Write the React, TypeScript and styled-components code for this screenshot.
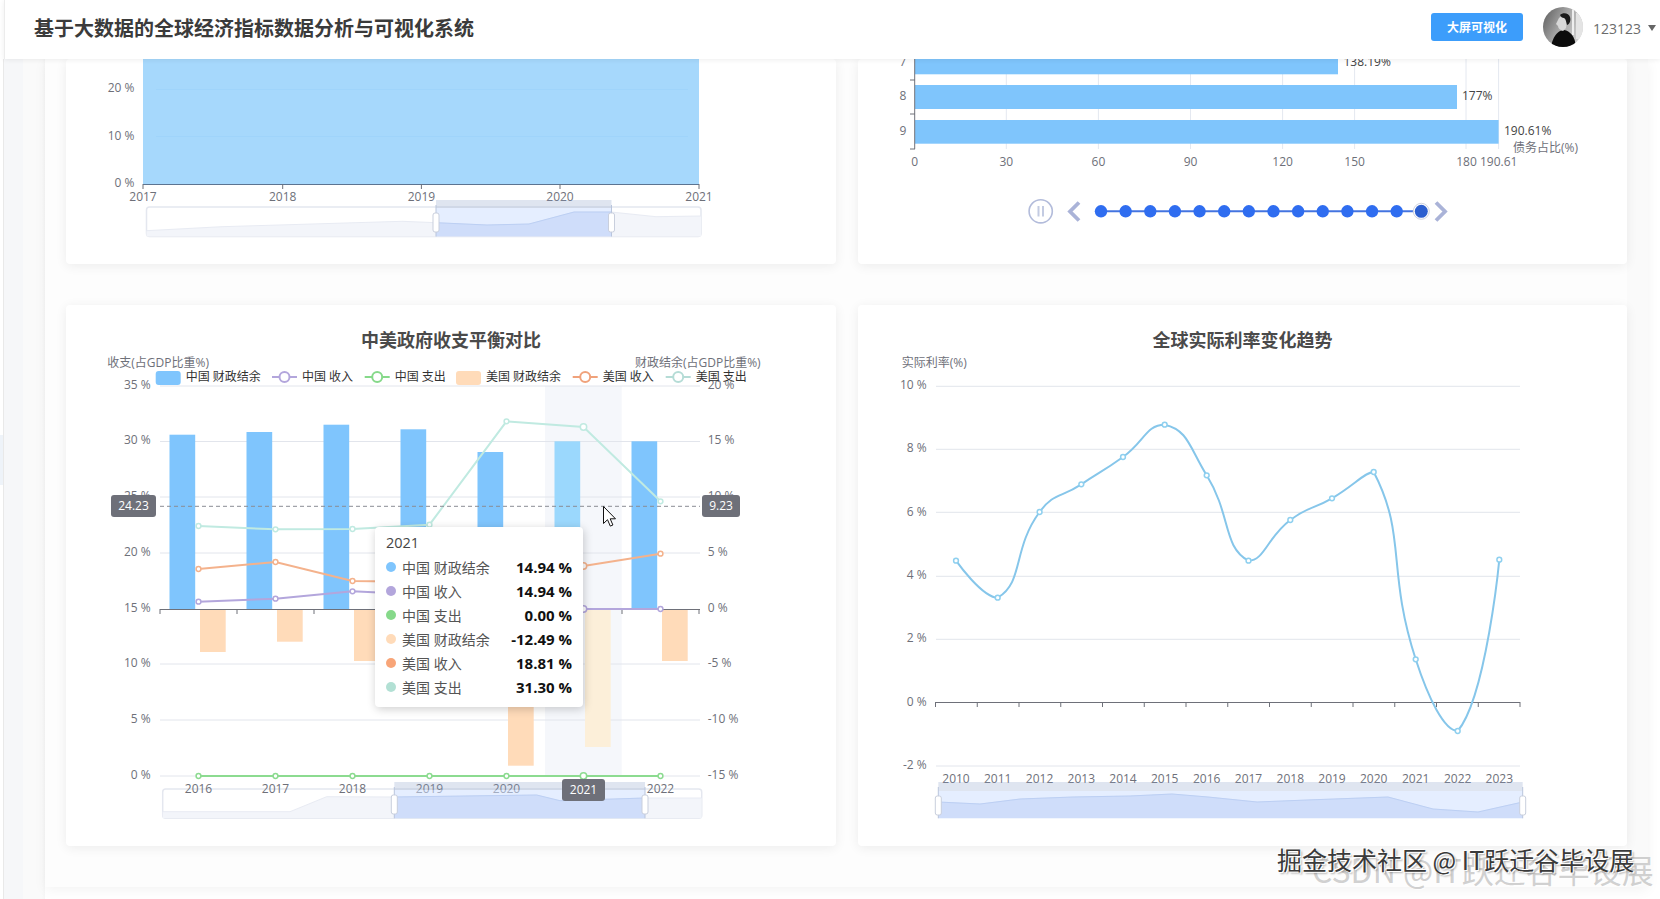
import React from 'react';
import styled, { createGlobalStyle } from 'styled-components';

const GlobalStyle = createGlobalStyle`
  html, body, #root {
    margin: 0;
    height: 100%;
  }
  body {
    font-family: "Open Sans", "Noto Sans CJK SC", sans-serif;
    background: #fff;
    overflow: hidden;
  }
`;

const Page = styled.div`
  position: relative;
  height: 899px;
  display: flex;
  flex-direction: column;
  overflow: hidden;
`;

const Header = styled.header`
  position: relative;
  z-index: 2;
  flex: none;
  height: 59px;
  margin-left: 4px;
  padding: 0 4px 0 29px;
  display: flex;
  align-items: center;
  background: #fff;
  border-left: 1px solid #ececec;
  box-shadow: 0 1px 5px rgba(0, 0, 0, 0.07);
`;

const SiteTitle = styled.h1`
  margin: 0 0 2px;
  flex: 1;
  font-size: 20px;
  line-height: 28px;
  font-weight: 700;
  color: #3b3b3b;
`;

const ScreenButton = styled.button`
  width: 92px;
  height: 28px;
  margin: 0 20px 6px 0;
  padding: 0;
  border: none;
  border-radius: 3px;
  background: #3c9dfb;
  color: #fff;
  font: 700 12px "Noto Sans CJK SC", sans-serif;
`;

const Avatar = styled.svg`
  width: 40px;
  height: 40px;
  margin: 0 10px 5px 0;
`;

const UserName = styled.span`
  font-size: 14px;
  color: #6b6b6b;
  margin-bottom: 3px;
`;

const Caret = styled.span`
  width: 0;
  height: 0;
  margin: 0 0 3px 7px;
  border-left: 4px solid transparent;
  border-right: 4px solid transparent;
  border-top: 6px solid #666;
`;

const Body = styled.div`
  flex: 1;
  display: flex;
  min-height: 0;
`;

const SideRail = styled.div`
  flex: none;
  width: 3px;
  padding-top: 376px;
  background: #fff;
  border-right: 1px solid #e9e9e9;
`;

const SideTab = styled.div`
  height: 50px;
  background: #eef3f9;
`;

const SideGutter = styled.div`
  flex: none;
  width: 41px;
  background: linear-gradient(90deg, #f6f7f9 0 19px, #fafafa 19px 38px, #f6f6f6 41px);
`;

const Main = styled.main`
  flex: none;
  width: 1603px;
  height: 828px;
  padding: 0 21px 41px;
  box-sizing: border-box;
  display: grid;
  grid-template-columns: 770px 769px;
  grid-template-rows: 205px 541px;
  column-gap: 22px;
  row-gap: 41px;
  background: #fdfdfd;
  box-shadow: 0 3px 12px rgba(0, 0, 0, 0.05), inset -21px 0 0 #fafafa;
`;

const Card = styled.section`
  position: relative;
  background: #fff;
  border-radius: 4px;
  box-shadow: 0 2px 12px rgba(0, 0, 0, 0.07);
  display: flex;
  flex-direction: column;
`;

const CardTitle = styled.h3`
  flex: none;
  margin: 0;
  padding-top: 23px;
  height: 25px;
  font-size: 18px;
  line-height: 24px;
  font-weight: 700;
  color: #4a4a4a;
  text-align: center;
`;

const Chart = styled.svg`
  display: block;
  flex: 1;
  width: 100%;
  min-height: 0;
  overflow: hidden;
`;

const Label = styled.text.attrs({ dy: -1 })<{ $anchor?: string; $color?: string }>`
  font-size: 12px;
  fill: ${(p) => p.$color ?? '#6e7079'};
  text-anchor: ${(p) => p.$anchor ?? 'middle'};
  dominant-baseline: central;
`;

const Tooltip = styled.div`
  position: absolute;
  left: 309px;
  top: 222px;
  width: 208px;
  height: 180px;
  box-sizing: border-box;
  padding: 4px 11px 8px 11px;
  background: #fff;
  border-radius: 4px;
  box-shadow: 1px 2px 10px rgba(0, 0, 0, 0.2);
`;

const TipTitle = styled.div`
  height: 24px;
  font-size: 14.5px;
  line-height: 24px;
  color: #464646;
`;

const TipRow = styled.div`
  height: 24px;
  display: flex;
  align-items: center;
`;

const TipDot = styled.i<{ $color: string }>`
  width: 10px;
  height: 10px;
  margin-right: 6px;
  border-radius: 50%;
  background: ${(p) => p.$color};
`;

const TipName = styled.span`
  font-size: 14px;
  color: #555;
`;

const TipValue = styled.b`
  margin-left: auto;
  font-size: 15px;
  font-weight: 700;
  color: #111;
`;

const JuejinMark = styled.div`
  position: absolute;
  left: 1277px;
  top: 843px;
  font: 400 25px/32px "Noto Sans CJK SC", sans-serif;
  white-space: nowrap;
  color: #3a3a3a;
  text-shadow: 1px 1px 0 #fff, -1px -1px 0 #fff, 2px 2px 2px rgba(0, 0, 0, 0.3);
  z-index: 4;
`;

const CsdnMark = styled.div`
  position: absolute;
  left: 1312px;
  top: 849px;
  font: 400 32px/40px "Noto Sans CJK SC", sans-serif;
  white-space: nowrap;
  color: rgba(170, 170, 170, 0.55);
  text-shadow: 1px 1px 0 rgba(255, 255, 255, 0.7);
  z-index: 3;
`;

type Pt = [number, number];

const toLine = (pts: Pt[]) => pts.map((p) => p.join(',')).join(' ');

// same idea as echarts smooth lines: tangent from neighbours, clamped at peaks
const smoothPath = (pts: Pt[], smooth = 0.5) => {
  const clamp = (v: number, a: number, b: number) => Math.min(Math.max(v, Math.min(a, b)), Math.max(a, b));
  const cps = pts.map((p, i) => {
    const prev = pts[i - 1];
    const next = pts[i + 1];
    if (!prev || !next) return { inc: p, out: p };
    const vx = (next[0] - prev[0]) * smooth;
    const vy = (next[1] - prev[1]) * smooth;
    const lp = Math.hypot(p[0] - prev[0], p[1] - prev[1]);
    const ln = Math.hypot(next[0] - p[0], next[1] - p[1]);
    const rn = ln / (lp + ln);
    const inc: Pt = [p[0] - vx * (1 - rn), clamp(p[1] - vy * (1 - rn), p[1], prev[1])];
    const out: Pt = [p[0] + vx * rn, clamp(p[1] + vy * rn, p[1], next[1])];
    return { inc, out };
  });
  let d = `M${pts[0][0]},${pts[0][1]}`;
  for (let i = 1; i < pts.length; i++) {
    const a = cps[i - 1].out;
    const b = cps[i].inc;
    d += ` C${a[0]},${a[1]} ${b[0]},${b[1]} ${pts[i][0]},${pts[i][1]}`;
  }
  return d;
};

interface ZoomProps {
  id: string;
  x0: number;
  x1: number;
  y0: number;
  y1: number;
  s0: number;
  s1: number;
  top: number;
  line: Pt[];
  framed?: boolean;
  children?: React.ReactNode;
}

// children are the axis labels that sit between the slider frame and its selection
const DataZoom: React.FC<ZoomProps> = ({ id, x0, x1, y0, y1, s0, s1, top, line, framed = true, children }) => {
  const area = `${x0},${y1} ${toLine(line)} ${x1},${y1}`;
  return (
    <g>
      <clipPath id={id}>
        <rect x={s0} y={top} width={s1 - s0} height={y1 - top} />
      </clipPath>
      {framed && <rect x={x0} y={y0} width={x1 - x0} height={y1 - y0} rx={3} fill="#fff" stroke="#e4e7ef" strokeWidth={1.5} />}
      <polygon points={area} fill="#f3f5fa" />
      <polyline points={toLine(line)} fill="none" stroke="#e8ebf3" />
      {children}
      <rect x={s0} y={top} width={s1 - s0} height={y0 - top + 1} fill="#8ba3c9" fillOpacity={0.28} />
      <rect x={s0} y={y0 + 1} width={s1 - s0} height={y1 - y0 - 1} fill="#cfe0ff" fillOpacity={0.55} />
      <polygon points={area} fill="#cbdbf9" fillOpacity={0.85} clipPath={`url(#${id})`} />
      <polyline points={toLine(line)} fill="none" stroke="#bccff3" clipPath={`url(#${id})`} />
      <line x1={s0} x2={s0} y1={top + 5} y2={y1} stroke="#b9c5dc" />
      <line x1={s1} x2={s1} y1={top + 5} y2={y1} stroke="#b9c5dc" />
      <rect x={s0 - 3} y={y0 + 6} width={6} height={19} rx={2} fill="#fff" stroke="#c9cfdd" />
      <rect x={s1 - 3} y={y0 + 6} width={6} height={19} rx={2} fill="#fff" stroke="#c9cfdd" />
    </g>
  );
};

const Pill: React.FC<{ x: number; y: number; w: number; text: string }> = ({ x, y, w, text }) => (
  <g>
    <rect x={x} y={y} width={w} height={22} rx={3} fill="#6e7079" />
    <Label x={x + w / 2} y={y + 11} $color="#fff">
      {text}
    </Label>
  </g>
);

const AreaChart = () => {
  const ticks = [143, 282.7, 421.4, 560, 699];
  const years = ['2017', '2018', '2019', '2020', '2021'];
  return (
    <Chart viewBox="66 59 770 205">
      <rect x={143} y={59} width={556} height={125} fill="#a6d8fc" />
      <line x1={156} x2={688} y1={89.5} y2={89.5} stroke="#9fd4fb" />
      <line x1={156} x2={688} y1={136.5} y2={136.5} stroke="#9fd4fb" />
      <Label x={134.5} y={88} $anchor="end">20 %</Label>
      <Label x={134.5} y={136} $anchor="end">10 %</Label>
      <Label x={134.5} y={183} $anchor="end">0 %</Label>
      <line x1={143} x2={699} y1={184.5} y2={184.5} stroke="#5c7491" />
      {ticks.map((x, i) => (
        <g key={x}>
          <line x1={x} x2={x} y1={184} y2={189} stroke="#6e7079" />
          <Label x={x} y={197}>{years[i]}</Label>
        </g>
      ))}
      <DataZoom
        id="zoom-a"
        x0={146.5}
        x1={701}
        y0={207}
        y1={236.5}
        s0={436}
        s1={611.5}
        top={200}
        line={[[146.5, 230.7], [222, 226.7], [402, 221.3], [436, 222.7], [487, 225], [529, 224], [574, 212], [611, 212], [656, 216.7], [701, 216]]}
      />
    </Chart>
  );
};

const BarTimeline = () => {
  const grid = [1006.3, 1098.4, 1190.5, 1282.6, 1354.6, 1466, 1498.6];
  const ticks: [number, string][] = [[914.7, '0'], [1006.3, '30'], [1098.4, '60'], [1190.5, '90'], [1282.6, '120'], [1354.6, '150'], [1466.5, '180']];
  const dots = Array.from({ length: 14 }, (_, i) => 1101 + i * 24.64);
  return (
    <Chart viewBox="858 59 769 205">
      {grid.map((x) => (
        <line key={x} x1={x} x2={x} y1={59} y2={149} stroke="#e4e8f0" />
      ))}
      <rect x={915} y={59} width={423} height={15.3} fill="#7fc5fc" />
      <rect x={915} y={85} width={542} height={24} fill="#7fc5fc" />
      <rect x={915} y={120} width={583.6} height={23.7} fill="#7fc5fc" />
      <line x1={914.7} x2={914.7} y1={59} y2={149} stroke="#6e7079" />
      {[80, 114, 149].map((y) => (
        <line key={y} x1={910} x2={915} y1={y} y2={y} stroke="#6e7079" />
      ))}
      <Label x={903} y={62}>7</Label>
      <Label x={903} y={96.5}>8</Label>
      <Label x={903} y={131}>9</Label>
      <Label x={1343.5} y={62} $anchor="start" $color="#444">138.19%</Label>
      <Label x={1462} y={96.5} $anchor="start" $color="#444">177%</Label>
      <Label x={1504} y={131.5} $anchor="start" $color="#444">190.61%</Label>
      <Label x={1513} y={148.5} $anchor="start">债务占比(%)</Label>
      {ticks.map(([x, t]) => (
        <Label key={t} x={x} y={162.5}>{t}</Label>
      ))}
      <Label x={1480} y={162.5} $anchor="start">190.61</Label>
      <circle cx={1040.7} cy={211.3} r={11.6} fill="#fff" stroke="#b3bcdb" strokeWidth={1.6} />
      <rect x={1037.5} y={206} width={2} height={10.5} fill="#c3cbe2" />
      <rect x={1042} y={206} width={2} height={10.5} fill="#c3cbe2" />
      <polyline points="1079,202.5 1070,211.5 1079,220.5" fill="none" stroke="#aab3d8" strokeWidth={3.8} />
      <polyline points="1436,202.5 1445,211.5 1436,220.5" fill="none" stroke="#aab3d8" strokeWidth={3.8} />
      <line x1={1101} x2={1421} y1={211.3} y2={211.3} stroke="#4474e0" strokeWidth={2} />
      {dots.slice(0, -1).map((x) => (
        <circle key={x} cx={x} cy={211.3} r={6.2} fill="#2f6df0" />
      ))}
      <circle cx={1421.3} cy={211.3} r={8} fill="#fff" stroke="#cfd3df" />
      <circle cx={1421.3} cy={211.3} r={6.5} fill="#2c5fcf" />
    </Chart>
  );
};

const CX = [198.5, 275.5, 352.5, 429.5, 506.5, 583.5, 660.5];
const CN_BAR = [434.7, 432, 424.7, 429.3, 452, 441.3, 441.3];
const US_BAR = [652, 641.7, 661, 680, 765.7, 747, 661];
const line = (ys: number[]): Pt[] => ys.map((y, i) => [CX[i], y]);

const SERIES = [
  { color: '#c0eae1', pts: line([526, 529.3, 529, 524.7, 421.3, 427, 501.3]) },
  { color: '#f4b28c', pts: line([569, 562, 581, 582, 570, 566, 553.7]) },
  { color: '#b3a6dc', pts: line([601.7, 598.7, 591.3, 595, 608, 609, 609]) },
  { color: '#8cdb90', pts: line([776, 776, 776, 776, 776, 776, 776]) },
];

const GRID_Y = [386, 441.5, 497, 553, 664, 720, 776];

const LEGEND = [
  { kind: 'bar', x: 155.7, color: '#7fc5fd', text: '中国 财政结余' },
  { kind: 'line', x: 272, color: '#b3a6dc', text: '中国 收入' },
  { kind: 'line', x: 364.7, color: '#86d98a', text: '中国 支出' },
  { kind: 'bar', x: 456, color: '#ffdbb9', text: '美国 财政结余' },
  { kind: 'line', x: 572.7, color: '#f0a27b', text: '美国 收入' },
  { kind: 'line', x: 665.7, color: '#b5dcd6', text: '美国 支出' },
];

const BudgetChart = () => (
  <Chart viewBox="66 353 770 493">
    <rect x={545} y={386} width={76.7} height={390} fill="#f5f7fb" />
    {GRID_Y.map((y) => (
      <line key={y} x1={160} x2={700} y1={y} y2={y} stroke="#e2e5ec" />
    ))}
    <Label x={107.3} y={363.5} $anchor="start">收支(占GDP比重%)</Label>
    <Label x={635} y={363.5} $anchor="start">财政结余(占GDP比重%)</Label>
    {['35 %', '30 %', '25 %', '20 %', '15 %', '10 %', '5 %', '0 %'].map((t, i) => (
      <Label key={t} x={150.7} y={385.2 + i * 55.7} $anchor="end">{t}</Label>
    ))}
    {['20 %', '15 %', '10 %', '5 %', '0 %', '-5 %', '-10 %', '-15 %'].map((t, i) => (
      <Label key={t} x={707.7} y={385.2 + i * 55.7} $anchor="start">{t}</Label>
    ))}
    {LEGEND.map((l) => (
      <g key={l.text}>
        {l.kind === 'bar' ? (
          <rect x={l.x} y={371} width={25} height={14} rx={3} fill={l.color} />
        ) : (
          <g>
            <line x1={l.x} x2={l.x + 25} y1={377} y2={377} stroke={l.color} strokeWidth={2} />
            <circle cx={l.x + 12.5} cy={377} r={5} fill="#fff" stroke={l.color} strokeWidth={2} />
          </g>
        )}
        <Label x={l.x + 30} y={377} $anchor="start" $color="#333">{l.text}</Label>
      </g>
    ))}
    {CX.map((x, i) => (
      <g key={x}>
        <rect x={x - 29} y={CN_BAR[i]} width={25.7} height={609 - CN_BAR[i]} fill={i === 5 ? '#9bd8fd' : '#7fc5fd'} />
        <rect x={x + 1.5} y={609} width={25.7} height={US_BAR[i] - 609} fill={i === 5 ? '#fcefd9' : '#ffdbb9'} />
      </g>
    ))}
    <line x1={160} x2={700} y1={609.5} y2={609.5} stroke="#6e7079" />
    {[160, 237, 314, 391, 468, 545, 622, 699].map((x) => (
      <line key={x} x1={x} x2={x} y1={609} y2={614} stroke="#6e7079" />
    ))}
    {SERIES.map((s) => (
      <g key={s.color}>
        <polyline points={toLine(s.pts)} fill="none" stroke={s.color} strokeWidth={2} />
        {s.pts.map((p, i) => (
          <circle key={i} cx={p[0]} cy={p[1]} r={i === 5 ? 3.2 : 2.4} fill="#fff" stroke={s.color} strokeWidth={1.5} />
        ))}
      </g>
    ))}
    <DataZoom
      id="zoom-b"
      x0={162.7}
      x1={701.7}
      y0={789}
      y1={818.3}
      s0={394.3}
      s1={645}
      top={782}
      line={[[162.7, 811.7], [290, 811.7], [326.7, 796.7], [394, 797], [536.7, 795], [560, 800.7], [645, 798], [701.7, 798]]}
    >
      {CX.map((x, i) => (
        <Label key={x} x={x} y={789.2}>{2016 + i}</Label>
      ))}
    </DataZoom>
    <line x1={160} x2={700} y1={506.3} y2={506.3} stroke="#8a8d94" strokeDasharray="4 3" />
    <Pill x={111} y={495} w={45} text="24.23" />
    <Pill x={702} y={495} w={38} text="9.23" />
    <Pill x={562} y={779} w={43} text="2021" />
    <path d="M603.5 506.5v17l4-3.8 2.8 6.4 2.6-1.1-2.7-6.2h5.3z" fill="#fff" stroke="#111" strokeWidth={1} />
  </Chart>
);

const RATE_X = [956, 997.7, 1039.6, 1081.3, 1123, 1164.7, 1206.7, 1248.5, 1290.3, 1332, 1373.7, 1415.7, 1457.7, 1499.3];
const RATE_Y = [560.7, 597.7, 512, 484.3, 457, 424.7, 475.3, 560.7, 520, 498.3, 472, 659.3, 731, 559.7];
const RATE_PTS: Pt[] = RATE_X.map((x, i) => [x, RATE_Y[i]]);

const RateChart = () => (
  <Chart viewBox="858 353 769 493">
    <Label x={901.7} y={363.5} $anchor="start">实际利率(%)</Label>
    {[386.3, 449.3, 512.3, 576.3, 639.3, 766].map((y) => (
      <line key={y} x1={936} x2={1520} y1={y} y2={y} stroke="#e2e5ec" />
    ))}
    {['10 %', '8 %', '6 %', '4 %', '2 %', '0 %', '-2 %'].map((t, i) => (
      <Label key={t} x={926.7} y={385.2 + i * 63.4} $anchor="end">{t}</Label>
    ))}
    <line x1={936} x2={1520} y1={702.5} y2={702.5} stroke="#6e7079" />
    {Array.from({ length: 15 }, (_, i) => 935.5 + i * 41.75).map((x) => (
      <line key={x} x1={x} x2={x} y1={702} y2={707} stroke="#6e7079" />
    ))}
    {RATE_X.map((x, i) => (
      <Label key={x} x={x} y={779}>{2010 + i}</Label>
    ))}
    <path d={smoothPath(RATE_PTS)} fill="none" stroke="#86c6ea" strokeWidth={2} />
    {RATE_PTS.map((p) => (
      <circle key={p[0]} cx={p[0]} cy={p[1]} r={2.4} fill="#fff" stroke="#8fd0ef" strokeWidth={1.5} />
    ))}
    <DataZoom
      id="zoom-c"
      x0={938.3}
      x1={1522.7}
      y0={790}
      y1={818.3}
      s0={938.3}
      s1={1522.7}
      top={782}
      framed={false}
      line={[[938.3, 802], [980, 804], [1020, 799], [1073, 797], [1130, 796], [1172, 794], [1208, 797], [1257, 802], [1307, 800], [1388, 797], [1433, 809], [1478, 812], [1522.7, 802]]}
    />
  </Chart>
);

const TIP_ROWS = [
  { color: '#7fc5fd', name: '中国 财政结余', value: '14.94 %' },
  { color: '#b3a6dc', name: '中国 收入', value: '14.94 %' },
  { color: '#86d98a', name: '中国 支出', value: '0.00 %' },
  { color: '#ffdbb9', name: '美国 财政结余', value: '-12.49 %' },
  { color: '#f8a578', name: '美国 收入', value: '18.81 %' },
  { color: '#b2e0d4', name: '美国 支出', value: '31.30 %' },
];

const App: React.FC = () => (
  <Page>
    <GlobalStyle />
    <Header>
      <SiteTitle>基于大数据的全球经济指标数据分析与可视化系统</SiteTitle>
      <ScreenButton>大屏可视化</ScreenButton>
      <Avatar viewBox="0 0 40 40">
        <defs>
          <clipPath id="avatar-clip">
            <circle cx={20} cy={20} r={20} />
          </clipPath>
          <linearGradient id="avatar-bg" x1="0" x2="1" y1="0.1" y2="0.6">
            <stop offset="0" stopColor="#5f5f5f" />
            <stop offset="0.5" stopColor="#a6a6a6" />
            <stop offset="1" stopColor="#cfcfcf" />
          </linearGradient>
        </defs>
        <g clipPath="url(#avatar-clip)">
          <rect width={40} height={40} fill="url(#avatar-bg)" />
          <rect x={29} y={2} width={2} height={26} fill="#eee" />
          <rect x={33} y={6} width={7} height={26} fill="#e4e4e4" />
          <path d="M8 40c1-7 4-13 9-16l4-1c6 1 11 6 12 17z" fill="#0b0b0b" />
          <path d="M15 13c1-3 4-5 7-4l2 5-1 7-3 3c-3-1-5-3-5-5l-2-2z" fill="#d8d8d8" />
          <path d="M17 8c3-3 9-2 10 2 1 3 0 7-3 8-1-3-1-6-3-7-2 0-3-1-4-3z" fill="#1a1a1a" />
        </g>
      </Avatar>
      <UserName>123123</UserName>
      <Caret />
    </Header>
    <Body>
      <SideRail>
        <SideTab />
      </SideRail>
      <SideGutter />
      <Main>
        <Card>
          <AreaChart />
        </Card>
        <Card>
          <BarTimeline />
        </Card>
        <Card>
          <CardTitle>中美政府收支平衡对比</CardTitle>
          <BudgetChart />
          <Tooltip>
            <TipTitle>2021</TipTitle>
            {TIP_ROWS.map((r) => (
              <TipRow key={r.name}>
                <TipDot $color={r.color} />
                <TipName>{r.name}</TipName>
                <TipValue>{r.value}</TipValue>
              </TipRow>
            ))}
          </Tooltip>
        </Card>
        <Card>
          <CardTitle>全球实际利率变化趋势</CardTitle>
          <RateChart />
        </Card>
      </Main>
    </Body>
    <CsdnMark>CSDN @IT跃迁谷毕设展</CsdnMark>
    <JuejinMark>掘金技术社区 @ IT跃迁谷毕设展</JuejinMark>
  </Page>
);

export default App;
